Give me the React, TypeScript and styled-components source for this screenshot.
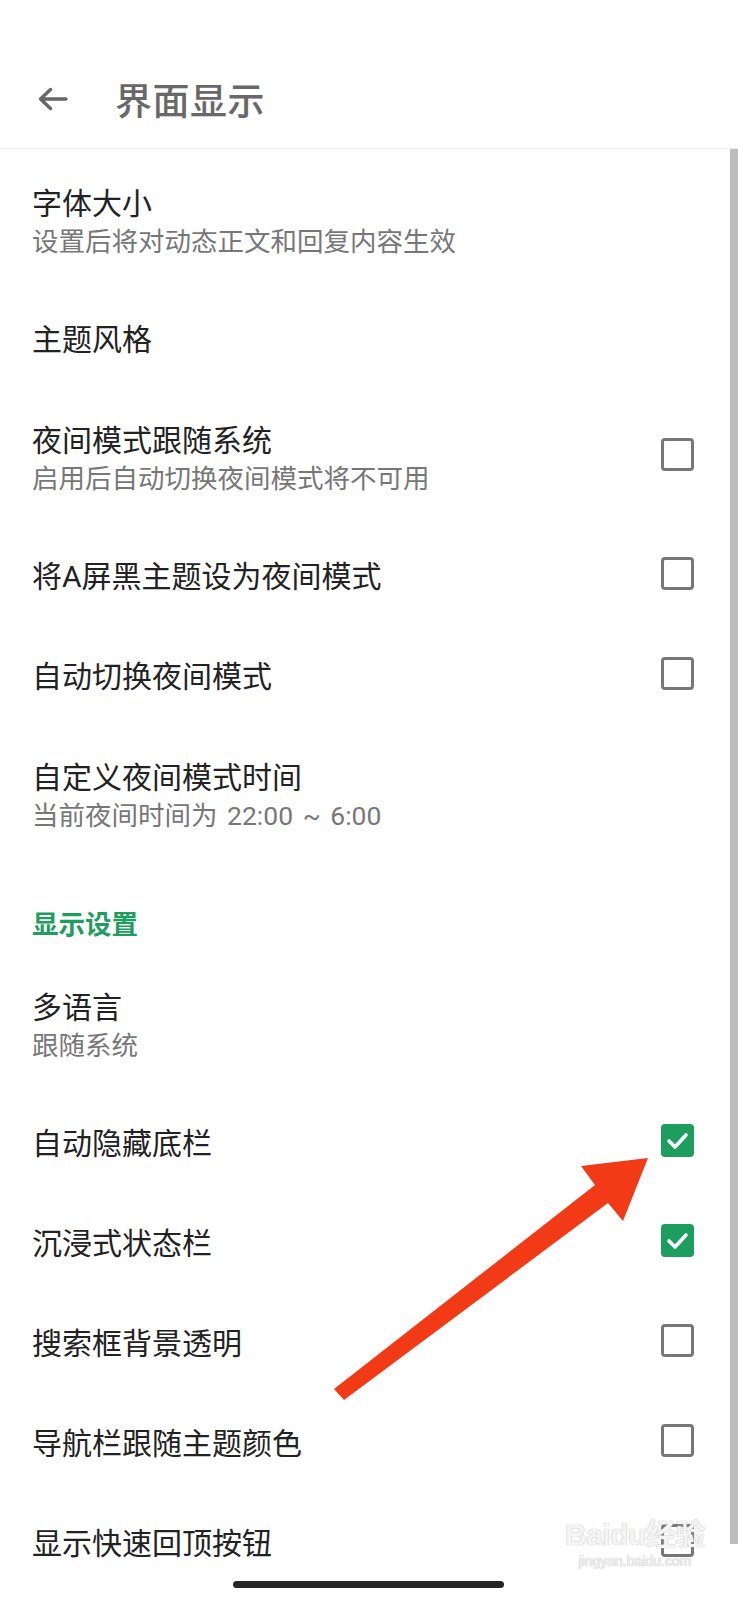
import React from 'react';
import styled, { createGlobalStyle } from 'styled-components';

const GlobalStyle = createGlobalStyle`
  html, body {
    margin: 0;
    padding: 0;
    background: #ffffff;
    overflow: hidden;
  }
  body {
    font-family: Roboto, "Noto Sans CJK SC", "Noto Sans", sans-serif;
  }
`;

const Screen = styled.div`
  position: relative;
  width: 738px;
  height: 1600px;
  background: #ffffff;
  overflow: hidden;
`;

const Header = styled.header`
  height: 149px;
  display: flex;
  align-items: center;
  padding-top: 50px;
  box-sizing: border-box;
  border-bottom: 1px solid #efefef;
`;

const BackButton = styled.button`
  width: 115px;
  height: 60px;
  padding: 0 0 0 37px;
  border: none;
  background: none;
  display: flex;
  align-items: center;
  cursor: pointer;

  svg {
    display: block;
  }
`;

const Title = styled.h1`
  margin: 0;
  font-family: "Noto Sans CJK SC", sans-serif;
  font-size: 37px;
  font-weight: 500;
  color: #686868;
  letter-spacing: 0.5px;
`;

const Body = styled.div`
  display: flex;
`;

const List = styled.div`
  flex: 1;
  display: flex;
  flex-direction: column;
`;

const Scrollbar = styled.div`
  width: 8px;
  height: 1395px;
  background: #bdbdbd;
`;

const Row = styled.div<{ $twoLine?: boolean }>`
  height: ${p => (p.$twoLine ? 137 : 100)}px;
  display: flex;
  align-items: center;
  padding: 0 36px 0 32px;
  box-sizing: border-box;
`;

const TextCol = styled.div`
  flex: 1;
  display: flex;
  flex-direction: column;
  gap: 1px;
  padding-top: 8px;
`;

const ItemTitle = styled.div`
  font-size: 30px;
  line-height: 38px;
  color: #222222;
`;

const ItemSub = styled.div`
  font-size: 26.5px;
  line-height: 35px;
  color: #777777;
  word-spacing: 3px;
`;

const SectionTitle = styled.div`
  height: 93px;
  padding: 47px 32px 0;
  box-sizing: border-box;
  font-size: 26.5px;
  line-height: 36px;
  font-weight: 600;
  color: #1f9d5f;
`;

const Box = styled.div<{ $checked?: boolean }>`
  width: 33px;
  height: 33px;
  box-sizing: border-box;
  border-radius: 4px;
  border: ${p => (p.$checked ? 'none' : '3.5px solid #777777')};
  background: ${p => (p.$checked ? '#1d9d5e' : 'transparent')};
  display: flex;
  align-items: center;
  justify-content: center;
`;

const HomeBar = styled.div`
  position: absolute;
  left: 233px;
  top: 1581px;
  width: 271px;
  height: 7px;
  border-radius: 4px;
  background: #262626;
`;

const Pointer = styled.svg`
  position: absolute;
  left: 0;
  top: 0;
  pointer-events: none;
`;

const Watermark = styled.div`
  position: absolute;
  left: 565px;
  top: 1518px;
  display: flex;
  flex-direction: column;
  align-items: center;
  color: rgba(255, 255, 255, 0.85);
  text-shadow: 0 0 1px #bcbcbc, 0 0 1px #bcbcbc;
  font-family: "Liberation Sans", "Noto Sans CJK SC", sans-serif;
  pointer-events: none;

  .brand {
    font-size: 30px;
    font-weight: 700;
    line-height: 34px;
    letter-spacing: -0.5px;
  }

  .site {
    font-size: 14px;
    line-height: 18px;
  }
`;

const Checkbox = ({ checked }: { checked?: boolean }) => (
  <Box $checked={checked}>
    {checked && (
      <svg width="33" height="33" viewBox="0 0 33 33">
        <polyline
          points="8,17 14,23 25,11"
          fill="none"
          stroke="#ffffff"
          strokeWidth="3.6"
          strokeLinecap="round"
          strokeLinejoin="round"
        />
      </svg>
    )}
  </Box>
);

type Item = {
  title: string;
  sub?: string;
  box?: 'on' | 'off';
};

const topItems: Item[] = [
  { title: '字体大小', sub: '设置后将对动态正文和回复内容生效' },
  { title: '主题风格' },
  { title: '夜间模式跟随系统', sub: '启用后自动切换夜间模式将不可用', box: 'off' },
  { title: '将A屏黑主题设为夜间模式', box: 'off' },
  { title: '自动切换夜间模式', box: 'off' },
  { title: '自定义夜间模式时间', sub: '当前夜间时间为 22:00 ~ 6:00' },
];

const displayItems: Item[] = [
  { title: '多语言', sub: '跟随系统' },
  { title: '自动隐藏底栏', box: 'on' },
  { title: '沉浸式状态栏', box: 'on' },
  { title: '搜索框背景透明', box: 'off' },
  { title: '导航栏跟随主题颜色', box: 'off' },
  { title: '显示快速回顶按钮', box: 'off' },
];

const SettingRow = ({ item }: { item: Item }) => (
  <Row $twoLine={!!item.sub}>
    <TextCol>
      <ItemTitle>{item.title}</ItemTitle>
      {item.sub && <ItemSub>{item.sub}</ItemSub>}
    </TextCol>
    {item.box && <Checkbox checked={item.box === 'on'} />}
  </Row>
);

export default function App() {
  return (
    <Screen>
      <GlobalStyle />
      <Header>
        <BackButton aria-label="返回">
          <svg width="31" height="24" viewBox="0 0 31 24">
            <path
              d="M29 12H4M13.5 2.5L3.5 12l10 9.5"
              fill="none"
              stroke="#666666"
              strokeWidth="3.4"
              strokeLinecap="round"
              strokeLinejoin="round"
            />
          </svg>
        </BackButton>
        <Title>界面显示</Title>
      </Header>
      <Body>
        <List>
          {topItems.map(item => (
            <SettingRow key={item.title} item={item} />
          ))}
          <SectionTitle>显示设置</SectionTitle>
          {displayItems.map(item => (
            <SettingRow key={item.title} item={item} />
          ))}
        </List>
        <Scrollbar />
      </Body>

      <Pointer width="738" height="1600" viewBox="0 0 738 1600">
        <polygon
          points="648,1158 623,1221 608,1203 344,1400 334,1389 595,1185 581,1166"
          fill="#f23a16"
        />
      </Pointer>

      <Watermark>
        <div className="brand">Baidu经验</div>
        <div className="site">jingyan.baidu.com</div>
      </Watermark>

      <HomeBar />
    </Screen>
  );
}
